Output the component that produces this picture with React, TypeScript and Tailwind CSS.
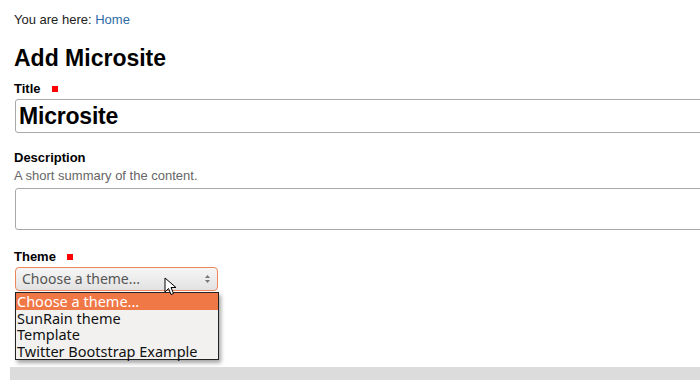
export default function App() {
  const options = ["Choose a theme...", "SunRain theme", "Template", "Twitter Bootstrap Example"];
  return (
    <div className="relative h-[380px] w-[700px] overflow-hidden bg-white font-['Liberation_Sans',Arial,sans-serif] text-black">
      <div className="pl-[14px] pt-[12px]">
        <p className="text-[13px] leading-[15px] text-[#222]">
          You are here: <a className="text-[#2c6aa8]">Home</a>
        </p>
        <h1 className="mt-[17px] text-[23px] font-bold leading-[28px]">Add Microsite</h1>

        <div className="mt-[9px] flex items-center gap-[11px]">
          <span className="text-[13px] font-bold leading-[15px]">Title</span>
          <span className="h-[6px] w-[6px] bg-[#ff0000]" />
        </div>
        <div className="ml-[1px] mt-[3px] flex h-[34px] w-[720px] items-center rounded-[3px] border border-[#a8a8a8] pl-[3px]">
          <span className="text-[23px] font-bold leading-[28px] tracking-[-0.2px]">Microsite</span>
        </div>

        <div className="mt-[17px] text-[13px] font-bold leading-[15px]">Description</div>
        <div className="mt-[3px] text-[13px] leading-[15px] text-[#666]">A short summary of the content.</div>
        <div className="ml-[1px] mt-[5px] h-[42px] w-[720px] rounded-[3px] border border-[#a8a8a8]" />

        <div className="mt-[19px] flex items-center gap-[11px]">
          <span className="text-[13px] font-bold leading-[15px]">Theme</span>
          <span className="h-[6px] w-[6px] bg-[#ff0000]" />
        </div>
        <div className="ml-[1px] mt-[3px] flex h-[24px] w-[203px] items-center justify-between rounded-[4px] border border-[#f0845a] bg-gradient-to-b from-[#f6f6f6] to-[#e2e2e2] pl-[6px] pr-[6px] font-['Noto_Sans','DejaVu_Sans',sans-serif] text-[14px] text-[#555]">
          <span className="leading-[16px]">Choose a theme...</span>
          <svg width="7" height="12" viewBox="0 0 7 12">
            <path d="M3.5 2 L6 5 H1 Z" fill="#777" />
            <path d="M3.5 10 L6 7 H1 Z" fill="#777" />
          </svg>
        </div>
      </div>

      <div className="absolute left-[15px] top-[292px] w-[204px] border border-[#222] bg-[#f2f1f0] font-['Noto_Sans','DejaVu_Sans',sans-serif] text-[14.5px] leading-[16.5px] shadow-[2px_3px_4px_rgba(0,0,0,0.35)]">
        {options.map((o, i) => (
          <div key={o} className={i === 0 ? "bg-[#f07746] pl-[1px] text-white" : "pl-[1px] text-[#111]"}>
            {o}
          </div>
        ))}
      </div>

      <svg className="absolute left-[164px] top-[277px]" width="14" height="20" viewBox="0 0 14 20">
        <path d="M1 1 L1 15 L4.5 11.5 L7 17.5 L9.5 16.5 L7 10.5 L12 10.5 Z" fill="#fff" stroke="#000" strokeWidth="1" strokeLinejoin="round" />
      </svg>

      <div className="absolute bottom-0 left-[10px] h-[13px] w-[690px] bg-[#dcdcdc]" />
    </div>
  );
}
